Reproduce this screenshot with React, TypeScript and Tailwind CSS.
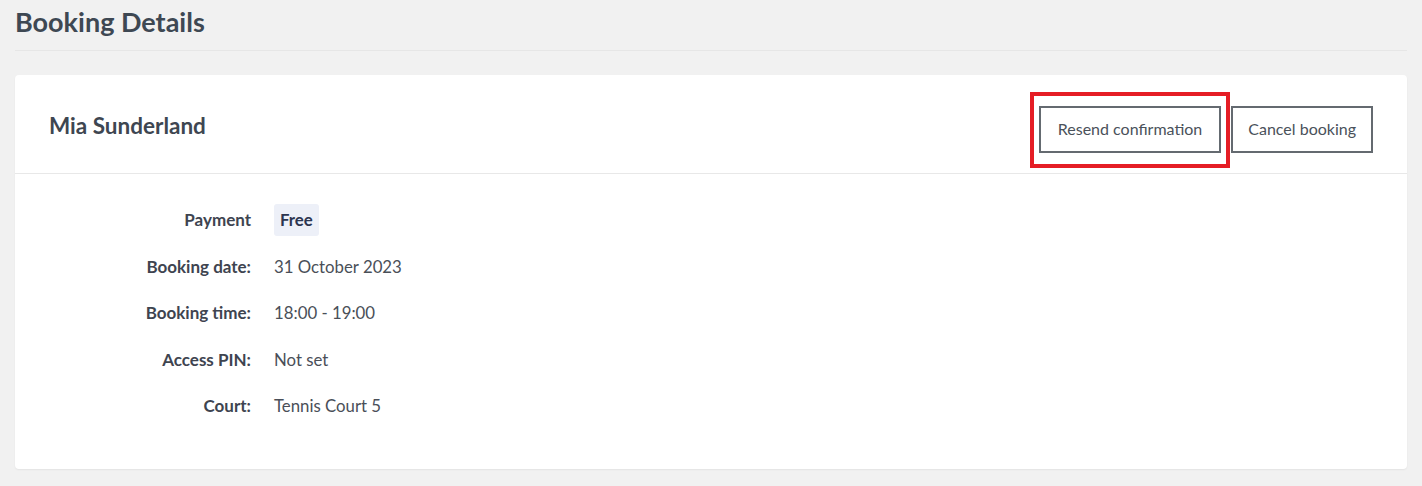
import React from "react";

const rows: { label: string; value: string; badge?: boolean }[] = [
  { label: "Payment", value: "Free", badge: true },
  { label: "Booking date:", value: "31 October 2023" },
  { label: "Booking time:", value: "18:00 - 19:00" },
  { label: "Access PIN:", value: "Not set" },
  { label: "Court:", value: "Tennis Court 5" },
];

export default function App() {
  return (
    <div className="min-h-[486px] bg-[#f1f1f1] font-['Lato','Liberation_Sans',sans-serif] text-[#454d57]">
      <div className="px-[15px]">
        <div className="border-b border-[#e6e6e6] pt-[4px] pb-[10px]">
          <h1 className="text-[27px] font-bold leading-[36px] text-[#3e4853]">Booking Details</h1>
        </div>

        <div className="mt-[24px] rounded-[4px] bg-white shadow-[0_1px_2px_rgba(0,0,0,0.06)]">
          {/* header */}
          <div className="flex h-[99px] items-center justify-between border-b border-[#e8e8e8] px-[34px]">
            <h2 className="pt-[3px] text-[22.5px] font-bold text-[#3e4651]">Mia Sunderland</h2>
            <div className="flex items-center gap-[10px] pt-[10px]">
              <div className="relative">
                <button className="h-[47px] border-2 border-[#646a70] bg-white px-[17px] text-[16px] text-[#4a515a]">
                  Resend confirmation
                </button>
                <div className="pointer-events-none absolute -left-[9px] -right-[9px] -top-[14px] -bottom-[15px] border-[4px] border-[#e51d25]" />
              </div>
              <button className="h-[47px] border-2 border-[#646a70] bg-white px-[15px] text-[16px] text-[#4a515a]">
                Cancel booking
              </button>
            </div>
          </div>

          {/* details */}
          <div className="flex flex-col gap-[16.5px] pt-[31px] pb-[48px]">
            {rows.map((r) => (
              <div key={r.label} className="flex h-[30px] items-center">
                <div className="w-[236px] text-right text-[17px] font-bold text-[#3e4450]">{r.label}</div>
                <div className="ml-[23px] text-[16.8px]">
                  {r.badge ? (
                    <span className="inline-block rounded-[3px] bg-[#edf0f8] px-[6px] py-[3px] font-bold text-[#2b3550]">{r.value}</span>
                  ) : (
                    <span className="text-[#4a4f58]">{r.value}</span>
                  )}
                </div>
              </div>
            ))}
          </div>
        </div>
      </div>
    </div>
  );
}
